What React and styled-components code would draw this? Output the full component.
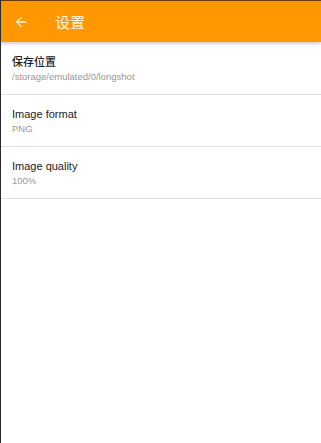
import React from 'react';
import styled, { createGlobalStyle } from 'styled-components';

const Global = createGlobalStyle`
  html, body { margin: 0; padding: 0; background: #fff; }
  body { font-family: "Liberation Sans", "Noto Sans CJK SC", sans-serif; }
`;

const items = [
  { title: '保存位置', value: '/storage/emulated/0/longshot' },
  { title: 'Image format', value: 'PNG' },
  { title: 'Image quality', value: '100%' },
];

function App() {
  return (
    <Page>
      <Global />
      <TopEdge />
      <Toolbar>
        <Back viewBox="0 0 24 24">
          <path d="M20 11H7.83l5.59-5.59L12 4l-8 8 8 8 1.41-1.41L7.83 13H20v-2z" />
        </Back>
        <Title>设置</Title>
      </Toolbar>
      <List>
        {items.map((it) => (
          <Row key={it.title}>
            <RowTitle>{it.title}</RowTitle>
            <RowValue>{it.value}</RowValue>
          </Row>
        ))}
      </List>
    </Page>
  );
}

export default App;

const Page = styled.div`
  width: 321px;
  height: 443px;
  background: #fff;
  border-left: 1px solid #2a2a2a;
  box-sizing: border-box;
  display: flex;
  flex-direction: column;
  overflow: hidden;
`;

const TopEdge = styled.div`
  height: 1px;
  background: #6b3a10;
  margin-left: -1px;
`;

const Toolbar = styled.div`
  height: 41px;
  background: #ff9800;
  margin-left: -1px;
  display: flex;
  align-items: center;
  padding-left: 13px;
  box-shadow: 0 2px 3px rgba(0, 0, 0, 0.2);
  position: relative;
  z-index: 1;
`;

const Back = styled.svg`
  width: 16px;
  height: 16px;
  fill: #fff3dc;
`;

const Title = styled.div`
  margin-left: 26px;
  color: #fff3dc;
  font-size: 15px;
  font-family: "Noto Sans CJK SC", sans-serif;
`;

const List = styled.div`
  display: flex;
  flex-direction: column;
  padding-top: 1px;
`;

const Row = styled.div`
  height: 51px;
  border-bottom: 1px solid #e2e2e2;
  display: flex;
  flex-direction: column;
  justify-content: center;
  padding-left: 11px;
`;

const RowTitle = styled.div`
  font-size: 11px;
  color: #222;
  line-height: 15px;
  font-weight: 500;
`;

const RowValue = styled.div`
  font-size: 9.5px;
  color: #979797;
  line-height: 13px;
`;
